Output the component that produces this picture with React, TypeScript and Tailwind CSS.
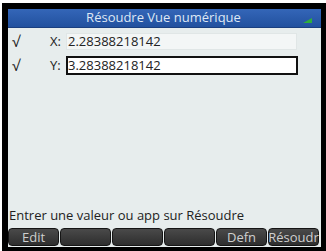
import React from "react";

export default function App() {
  const font = { fontFamily: '"Open Sans", "DejaVu Sans", sans-serif' };
  const btns = ["Edit", "", "", "", "Defn", "Résoudr"];
  return (
    <div className="w-[326px] h-[251px] bg-white pt-[3px] pl-[2px] overflow-hidden" style={font}>
      <div className="w-[324px] h-[248px] bg-black pt-[6px] pl-[6px]">
        <div className="w-[313px] h-[238px] bg-[#e7eded] flex flex-col">
          <div className="relative h-[19px] bg-gradient-to-b from-[#3466b8] to-[#22519f] flex items-center justify-center text-[13px] text-[#dfe8f5] leading-none border-b border-[#1a3f80]">
            <span className="-mt-[1px] pr-[2px]">Résoudre Vue numérique</span>
            <div className="absolute right-[9px] top-[9px] w-[9px] h-[5px] bg-[#2fae3c]" style={{ clipPath: "polygon(0 100%, 100% 0, 100% 100%)" }} />
          </div>
          <div className="flex flex-col pt-[5px] gap-[6px]">
            <div className="flex items-center h-[17px]">
              <span className="w-[42px] pl-[4px] text-[15px] text-[#222]">√</span>
              <span className="w-[16px] text-[13px] text-[#222]">X:</span>
              <div className="w-[231px] h-[17px] bg-[#f3f6f6] border border-[#e0e6e6] flex items-center text-[13px] text-[#222] leading-none pl-[1px]">
                2.28388218142
              </div>
            </div>
            <div className="flex items-center h-[19px]">
              <span className="w-[42px] pl-[4px] text-[15px] text-[#222]">√</span>
              <span className="w-[16px] text-[13px] text-[#222]">Y:</span>
              <div className="w-[232px] h-[19px] bg-white border-2 border-[#111] flex items-center text-[13px] text-[#222] leading-none">
                3.28388218142
              </div>
            </div>
          </div>
          <div className="flex-1" />
          <div className="text-[13px] text-[#222] leading-none pl-[1px] mb-[6px]">
            Entrer une valeur ou app sur Résoudre
          </div>
          <div className="flex gap-[1px] h-[18px] mb-[1px]">
            {btns.map((b, i) => (
              <div
                key={i}
                className="w-[51px] h-[18px] rounded-[4px] bg-gradient-to-b from-[#4a4a4a] to-[#2e2e2e] border border-[#151515] flex items-center justify-center text-[13px] text-[#cfcfcf] leading-none"
              >
                {b}
              </div>
            ))}
          </div>
        </div>
      </div>
    </div>
  );
}
